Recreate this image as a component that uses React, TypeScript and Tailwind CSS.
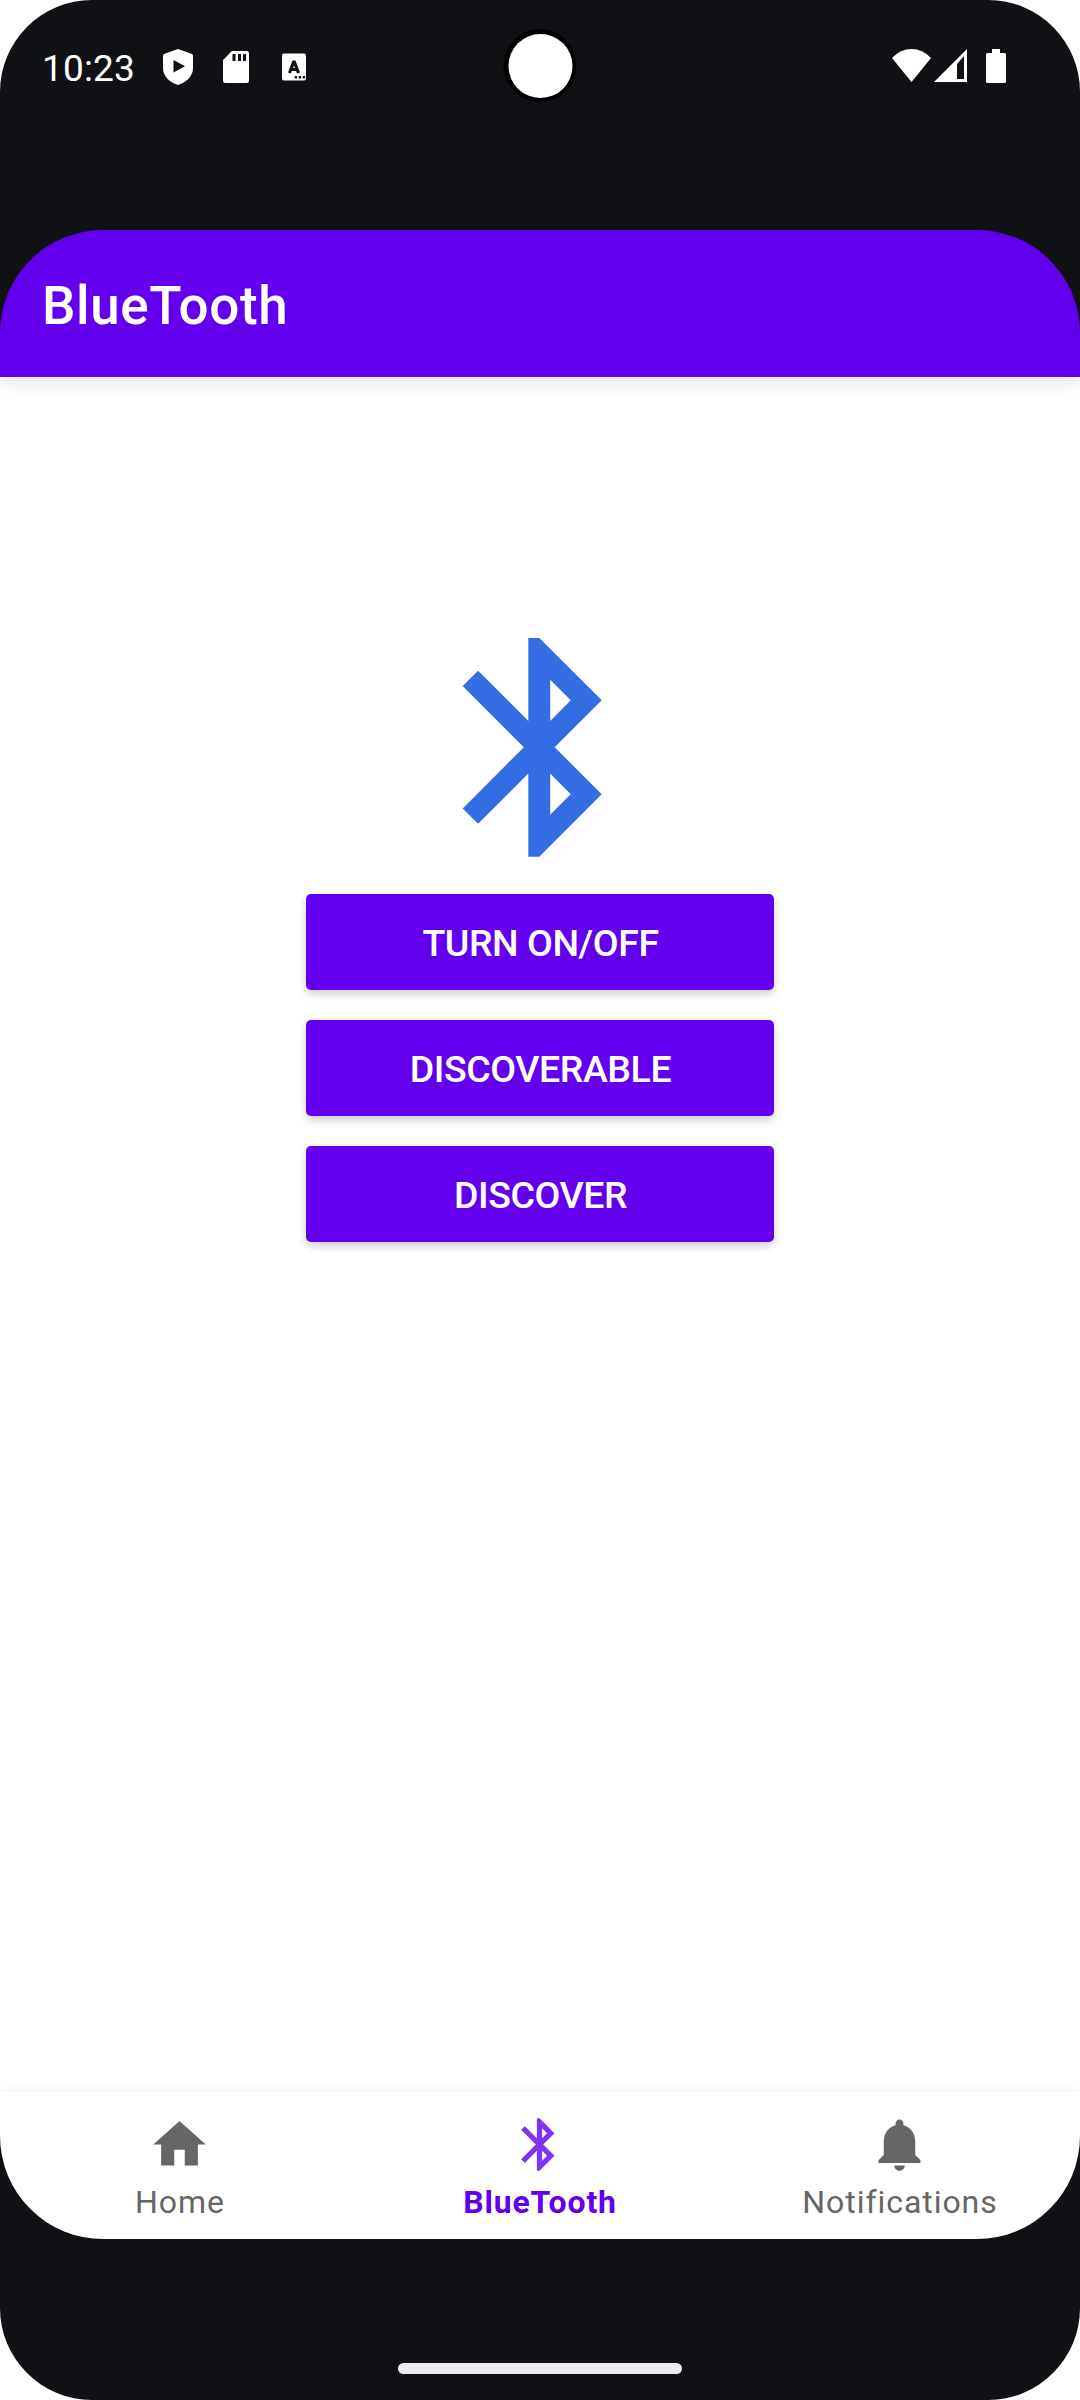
import React from "react";

const BT =
  "M17.71 7.71 12 2h-1v7.59L6.41 5 5 6.41 10.59 12 5 17.59 6.41 19 11 14.41V22h1l5.71-5.71-4.3-4.29 4.3-4.29zM13 5.83l1.88 1.88L13 9.59V5.83zm1.88 10.46L13 18.17v-3.76l1.88 1.88z";
const HOME = "M10 20v-6h4v6h5v-8h3L12 3 2 12h3v8z";
const BELL =
  "M12 22c1.1 0 2-.9 2-2h-4c0 1.1.89 2 2 2zm6-6v-5c0-3.07-1.64-5.64-4.5-6.32V4c0-.83-.67-1.5-1.5-1.5s-1.5.67-1.5 1.5v.68C7.63 5.36 6 7.92 6 11v5l-2 2v1h16v-1l-2-2z";

function Icon({ d, className }: { d: string; className: string }) {
  return (
    <svg viewBox="0 0 24 24" fill="currentColor" className={className}>
      <path d={d} />
    </svg>
  );
}

function StatusBar() {
  return (
    <header className="relative flex h-[230px] shrink-0 items-start justify-between pt-[42px] pl-[42px] pr-[73px] text-white">
      <div className="flex h-[50px] items-center">
        <span className="w-[120px] pt-[3px] text-[37px] leading-[50px] tracking-[0.15px]">10:23</span>
        <svg className="h-[50px] w-[150px]" viewBox="162 42 150 50" fill="white">
          <path
            fillRule="evenodd"
            d="M178 49l14 5q1 .5 1 2v12c0 8-6 14-15 17-9-3-15-9-15-17V56q0-1.500 1-2zM173.500 60v12.500l11.500-6.250z"
          />
          <path
            fillRule="evenodd"
            d="M232 51h14.500q2.500 0 2.500 2.500v27q0 2.500-2.500 2.500h-21q-2.500 0-2.500-2.500V60zM232.500 54v7h3v-7zm5.500 0v7h3v-7zm5 0v7h3v-7z"
          />
          <rect x="282" y="53.500" width="24" height="27" rx="2" />
          <path d="M289.500 73l4.500-12 4.500 12M291 69.500h6" fill="none" stroke="#101115" strokeWidth="3.200" strokeLinejoin="bevel" />
          <path d="M294.700 76h2.400v2.400h-2.400zm4 0h2.400v2.400h-2.400zm4 0h2.400v2.400h-2.400z" fill="#101115" />
        </svg>
      </div>
      <div className="absolute left-1/2 top-[29px] flex size-[73px] -translate-x-1/2 items-center justify-center rounded-full bg-black">
        <div className="size-[64px] rounded-full bg-white" />
      </div>
      <svg className="h-[50px] w-[117px]" viewBox="890 42 117 50" fill="white">
        <path d="M911.500 82L892 58q8.500-9 19.500-9t19.500 9z" />
        <path fillRule="evenodd" d="M967 49v33h-33zM957 64v15h7V56z" />
        <path d="M992 49h8v4h4.500q1.500 0 1.500 1.500v27q0 1.500-1.500 1.500h-17q-1.500 0-1.500-1.500v-27q0-1.500 1.500-1.500h4.500z" />
      </svg>
    </header>
  );
}

function ActionButton({ children }: { children: string }) {
  return (
    <button className="h-24 w-[468px] rounded-[5px] bg-[#6200ee] pt-[3px] pl-[1px] text-[37.500px] font-medium tracking-[-0.45px] text-white shadow-[0_4px_9px_rgba(0,0,0,0.2)]">
      {children}
    </button>
  );
}

function NavItem({ d, label, active }: { d: string; label: string; active?: boolean }) {
  return (
    <a className={active ? "flex flex-1 flex-col items-center pt-[21px] text-[#6200ee]" : "flex flex-1 flex-col items-center pt-[21px] text-[#666666]"}>
      <Icon d={d} className={active ? "-ml-px size-[63px] text-[#8133f1]" : "-ml-px size-[63px]"} />
      <span className={active ? "mt-[7px] text-[32px] leading-[38px] font-bold tracking-[0.85px]" : "mt-[7px] text-[32px] leading-[38px] tracking-[0.95px]"}>
        {label}
      </span>
    </a>
  );
}

export default function App() {
  return (
    <div className="h-[2400px] w-[1080px] bg-white font-['Roboto',sans-serif]">
      <div className="flex h-full flex-col overflow-hidden rounded-[92px] bg-[#101115]">
        <StatusBar />
        <div className="flex h-[2009px] shrink-0 flex-col overflow-hidden rounded-[103px]">
          <div className="z-10 flex h-[147px] shrink-0 items-center bg-[#6200ee] pl-[42px] pt-[7px] text-[53px] font-medium tracking-[0.6px] text-white shadow-[0_4px_18px_rgba(0,0,0,0.13)]">
            BlueTooth
          </div>
          <main className="flex flex-1 flex-col items-center bg-white pt-[239px]">
            <Icon d={BT} className="-ml-px size-[262.500px] text-[#346ce3]" />
            <div className="mt-[15.500px] flex flex-col gap-[30px]">
              <ActionButton>TURN ON/OFF</ActionButton>
              <ActionButton>DISCOVERABLE</ActionButton>
              <ActionButton>DISCOVER</ActionButton>
            </div>
          </main>
          <nav className="flex h-[147px] shrink-0 bg-white shadow-[0_0_9px_rgba(0,0,0,0.08)]">
            <NavItem d={HOME} label="Home" />
            <NavItem d={BT} label="BlueTooth" active />
            <NavItem d={BELL} label="Notifications" />
          </nav>
        </div>
        <div className="flex flex-1 items-end justify-center pb-[26px]">
          <div className="h-[11px] w-[284px] rounded-full bg-[#ececec]" />
        </div>
      </div>
    </div>
  );
}
